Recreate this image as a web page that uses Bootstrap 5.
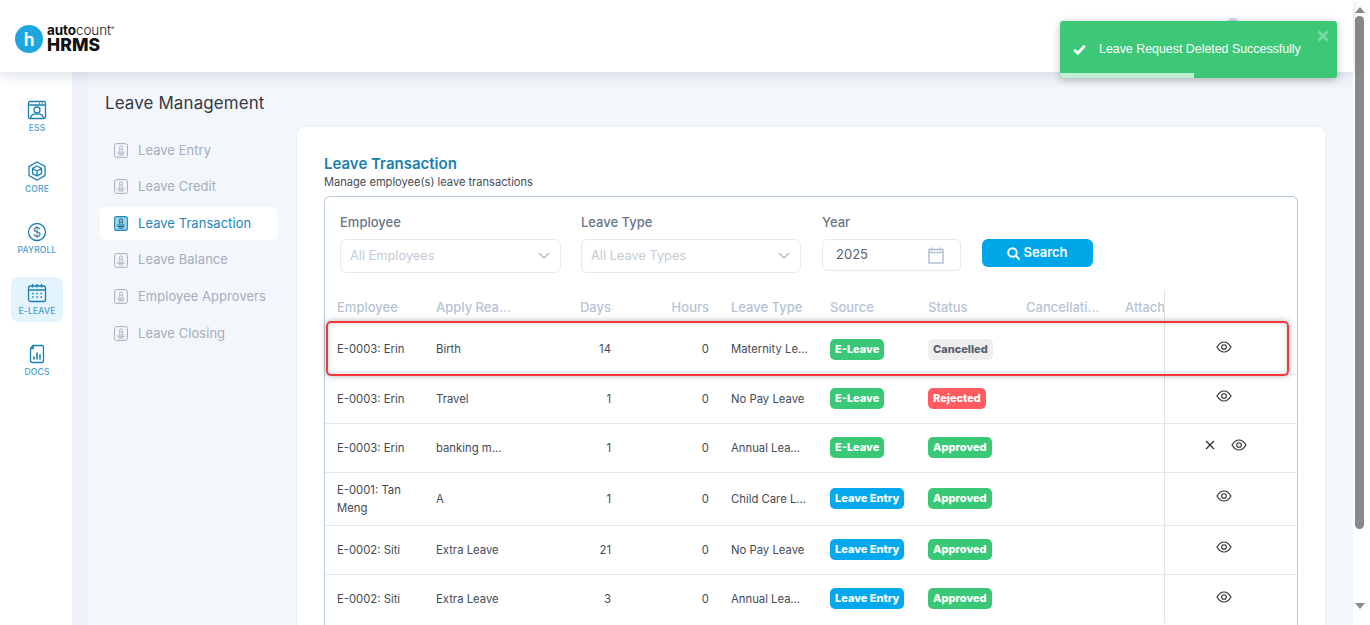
<!DOCTYPE html>
<html lang="en">
<head>
<meta charset="utf-8">
<title>Leave Transaction</title>
<link href="https://cdn.jsdelivr.net/npm/bootstrap@5.3.0/dist/css/bootstrap.min.css" rel="stylesheet">
<style>
html,body{height:625px;overflow:hidden;background:#fff}
body{font-family:Inter,"Noto Sans",sans-serif;color:#3f4254}
.app-frame{height:625px;width:1370px;overflow:hidden;position:relative}
.app-body{flex:1 1 auto;min-width:0;height:625px;display:flex;flex-direction:column}
.fake-scroll{width:17px;height:625px;background:#fff;flex:none;padding:7px 6px 3px 2px}
.fake-scroll .tri-up{width:0;height:0;border:5px solid transparent;border-top:0;border-bottom:6px solid #8a8a8a;margin:0 auto 3px}
.fake-scroll .thumb{height:513px;width:9px;background:#8a8a8a;border-radius:5px}
.fake-scroll .tri-down{width:0;height:0;border:5px solid transparent;border-bottom:0;border-top:6px solid #8a8a8a;margin:74px auto 0}
.top-bar{height:72px;background:#fff;flex:none;padding:5px 15px 0;box-shadow:0 2px 14px rgba(70,90,120,.22);position:relative;z-index:2}
.logo-dot{width:28px;height:28px;border-radius:50%;background:#1fa5e0;color:#fff;font:700 19px/27px Lato,sans-serif;text-align:center;flex:none}
.logo-words{margin-left:4px;color:#111;line-height:1}
.logo-a{font:700 13.500px/13px "Inter",sans-serif;letter-spacing:-.1px;white-space:nowrap}
.logo-a span{font-weight:300}
.logo-a sup{font-size:5px;top:-5px;font-weight:400;position:relative;line-height:0}
.logo-b{font:800 17.500px/16px Inter,sans-serif;letter-spacing:.1px}
.under-row{flex:1 1 auto;min-height:0;display:flex}
.side-rail{width:72px;background:#fff;flex:none;padding:22px 11px 0;gap:16px}
.rail-item{height:45px;width:52px;border-radius:8px;color:#1b7fb3;padding-top:6px}
.rail-item.on{background:#e3f4fd}
.rail-item svg{width:20px;height:20px;display:block}
.rail-item span{font-size:8.500px;font-weight:500;line-height:12px;margin-top:2px;color:#4a9cc8;letter-spacing:.2px}
.work-area{flex:1 1 auto;min-width:0;background:#f3f6fa;display:flex;border-left:16px solid #eff3f8}
.sub-menu{width:209px;flex:none;padding:21px 19px 0 12px}
.sub-title{font-size:16.900px;line-height:20px;color:#333a45;margin:0 0 21px 5px;font-weight:400;letter-spacing:.15px}
.sub-link{height:32.600px;margin-bottom:4px;border-radius:5px;padding-left:14px;gap:10px;color:#a4aebd;font-size:12.900px;letter-spacing:.1px;text-decoration:none;white-space:nowrap}
.sub-link svg{width:14px;height:15px;flex:none}
.sub-link.on{background:#fff;color:#2288b8}
.main-card{margin:55px 28px 0 0;flex:1 1 auto;min-width:0;border:0;border-radius:8px 8px 0 0;background:#fff;padding:28px 27px 0;height:500px;box-shadow:0 0 3px rgba(90,110,140,.1)}
.card-head{font-size:15px;font-weight:600;line-height:17px;color:#1b7fae;margin:0}
.card-sub{font-size:11.100px;line-height:14px;color:#444b57;margin:3px 0 7px}
.inner-box{border:1px solid #b9cadb;border-bottom:0;border-radius:6px 6px 0 0;height:470px;position:relative;padding:16px 0 0}
.filter-row{padding-left:15px;height:78px}
.filter-label{font-size:13px;font-weight:500;color:#68758a;line-height:18px;margin-bottom:8px;display:block}
.f-one{width:221px;margin-right:20px}
.f-two{width:220px;margin-right:21px}
.f-three{width:139px;margin-right:21px}
.fake-select{height:34px;border:1px solid #e4ebf3;border-radius:6px;padding:0 10px 0 9px;font-size:12.800px;color:#c4cbd5;background:#fff}
.fake-select svg{width:12px;height:8px;color:#b6bcc6}
.fake-date{height:32px;margin-top:1px;border:1px solid #e4ebf3;border-radius:5px;padding:0 16px 0 13px;font-size:13px;color:#5a616c;background:#fff}
.fake-date svg{width:16px;height:17px;color:#b3c1d3}
.go-btn{background:#00a7e8;border:0;color:#fff;border-radius:6px;width:111px;height:28px;margin-top:26px;font-size:13px;font-weight:600;padding:0;gap:3px}
.go-btn svg{width:13px;height:13px}
.data-table{table-layout:fixed;width:972px;margin:-1px 0 0;font-size:11.300px;color:#444a55}
.data-table th{height:35px;padding:0 12px;font-weight:500;font-size:13px;color:#b6c3d4;border-bottom:0;white-space:nowrap;overflow:hidden;vertical-align:middle}
.data-table td{height:49px;padding:0 10px 0 12px;border-bottom:1px solid #e6e9ee;vertical-align:middle;line-height:18px}
.data-table tr.tall td{height:53px}
.data-table tr:last-child td{border-bottom:0}
.data-table .num{text-align:right}
.data-table th.num{padding-right:10px}
.data-table .act{border-left:1px solid #dfe3ea;padding:0 14px 0 0;text-align:center;background:#fff}
.data-table .act.two-ico{padding-right:10px}
.cut{overflow:hidden;white-space:nowrap;text-overflow:ellipsis}
.cut-tight{max-width:71px}
.tag{display:inline-block;font-size:11px;font-weight:800;line-height:15px;padding:3px 5px;border-radius:5px;color:#fff;letter-spacing:0;white-space:nowrap}
.tag-green{background:#39c876}
.tag-blue{background:#03a9ec}
.tag-grey{background:#eeeeee;color:#5a6270}
.tag-red{background:#ff5b60}
.eye-ico{width:16px;height:14px;color:#333;position:relative;top:-3px}
.x-ico{width:12px;height:12px;color:#333;margin-right:15px;position:relative;top:-3px}
.red-mark{position:absolute;left:1px;top:124px;width:963px;height:55px;border:2px solid #f5373c;border-radius:5px;box-shadow:0 0 6px rgba(0,0,0,.3),inset 0 0 5px rgba(0,0,0,.18);pointer-events:none}
.toast-note{position:absolute;left:1060px;top:21px;width:277px;height:57px;background:#3dc878;border-radius:3px;color:#fff;font-family:"Liberation Sans",Arial,sans-serif;font-size:12.400px;z-index:5;box-shadow:0 2px 8px rgba(0,0,0,.25);padding:0 0 0 13px;gap:13px;overflow:hidden}
.toast-note .chk{width:13px;height:11px;flex:none}
.toast-close{position:absolute;right:8px;top:9px;width:12px;height:12px;color:#78dba3}
.toast-bar{position:absolute;left:0;bottom:0;height:5px;width:134px;background:#bfeed2}
.peek-dot{position:absolute;left:1226px;top:18px;width:14px;height:14px;border-radius:50%;background:#c4d2ea;z-index:3}
</style>
</head>
<body>
<svg width="0" height="0" class="d-block position-absolute">
  <symbol id="i-stamp" viewBox="0 0 14 15">
    <rect x=".6" y=".6" width="12.800" height="13.800" rx="2" fill="none" stroke="currentColor" stroke-width="1"/>
    <circle cx="7" cy="4.600" r="1.600" fill="none" stroke="currentColor" stroke-width=".9"/>
    <path d="M5.600 6.200v1.600M8.400 6.200v1.600M3.600 9h6.800M3.600 10.600h6.800M4.600 12.100h4.800" fill="none" stroke="currentColor" stroke-width=".9"/>
  </symbol>
  <symbol id="i-stamp-on" viewBox="0 0 14 15">
    <rect x=".6" y=".6" width="12.800" height="13.800" rx="2" fill="#9fd3ea" stroke="currentColor" stroke-width="1.100"/>
    <circle cx="7" cy="4.600" r="1.700" fill="none" stroke="#14688f" stroke-width="1"/>
    <path d="M5.600 6.200v1.600M8.400 6.200v1.600M3.400 9h7.200M3.400 10.600h7.200M4.600 12.100h4.800" fill="none" stroke="#14688f" stroke-width="1"/>
  </symbol>
  <symbol id="i-eye" viewBox="0 0 16 14">
    <path d="M1 7c2-3.300 4.300-5 7-5s5 1.700 7 5c-2 3.300-4.300 5-7 5s-5-1.700-7-5z" fill="none" stroke="currentColor" stroke-width="1.200"/>
    <circle cx="8" cy="7" r="2.300" fill="none" stroke="currentColor" stroke-width="1.100"/>
  </symbol>
  <symbol id="i-chev" viewBox="0 0 12 8"><path d="M1.500 1.500 6 6l4.500-4.500" fill="none" stroke="currentColor" stroke-width="1.500" stroke-linecap="round"/></symbol>
</svg>

<div class="app-frame d-flex">
  <div class="app-body">
    <header class="top-bar d-flex align-items-center">
      <div class="logo-dot">h</div>
      <div class="logo-words">
        <div class="logo-a">auto<span>count</span><sup>®</sup></div>
        <div class="logo-b">HRMS</div>
      </div>
    </header>
    <div class="under-row">
      <nav class="side-rail d-flex flex-column">
        <a class="rail-item d-flex flex-column align-items-center text-decoration-none">
          <svg viewBox="0 0 20 20" fill="none" stroke="currentColor" stroke-width="1.300"><rect x="1.500" y="1.500" width="17" height="17" rx="1.500"/><path d="M1.500 5h17M12 3.300h1M14.500 3.300h1M3.500 18.300c0-3 2.500-4.500 6.500-4.500s6.500 1.500 6.500 4.500"/><circle cx="10" cy="10" r="3"/></svg>
          <span>ESS</span>
        </a>
        <a class="rail-item d-flex flex-column align-items-center text-decoration-none">
          <svg viewBox="0 0 20 20" fill="none" stroke="currentColor" stroke-width="1.300"><path d="M10 1l8 4.500v9L10 19l-8-4.500v-9z"/><path d="M10 5l4.500 2.500v5L10 15l-4.500-2.500v-5zM5.500 7.500 10 10l4.500-2.500M10 10v5"/></svg>
          <span>CORE</span>
        </a>
        <a class="rail-item d-flex flex-column align-items-center text-decoration-none">
          <svg viewBox="0 0 20 20" fill="none" stroke="currentColor" stroke-width="1.300"><circle cx="10" cy="10" r="8.500"/><text x="10" y="14.500" text-anchor="middle" font-size="13" font-family="Inter,sans-serif" font-weight="400" fill="currentColor" stroke="none">$</text></svg>
          <span>PAYROLL</span>
        </a>
        <a class="rail-item on d-flex flex-column align-items-center text-decoration-none">
          <svg viewBox="0 0 20 20" fill="none" stroke="currentColor" stroke-width="1.300"><rect x="1.500" y="3" width="17" height="15.500" rx="2"/><path d="M1.500 7h17M5.500 1v3.500M10 1v3.500M14.500 1v3.500"/><path d="M5 10.500h1.500M9.300 10.500h1.500M13.500 10.500H15M5 14h1.500M9.300 14h1.500M13.500 14H15" stroke-width="1.600"/></svg>
          <span>E-LEAVE</span>
        </a>
        <a class="rail-item d-flex flex-column align-items-center text-decoration-none">
          <svg viewBox="0 0 20 20" fill="none" stroke="currentColor" stroke-width="1.300"><path d="M6 1.500h8.500a2 2 0 0 1 2 2v13a2 2 0 0 1-2 2h-9a2 2 0 0 1-2-2V4.500z"/><path d="M6 1.500v3H3.500M7 15.500v-3M10 15.500V8.500M13 15.500v-5" stroke-width="1.600"/></svg>
          <span>DOCS</span>
        </a>
      </nav>
      <div class="work-area">
        <aside class="sub-menu">
          <h1 class="sub-title">Leave Management</h1>
          <a class="sub-link d-flex align-items-center"><svg><use href="#i-stamp"/></svg>Leave Entry</a>
          <a class="sub-link d-flex align-items-center"><svg><use href="#i-stamp"/></svg>Leave Credit</a>
          <a class="sub-link on d-flex align-items-center"><svg><use href="#i-stamp-on"/></svg>Leave Transaction</a>
          <a class="sub-link d-flex align-items-center"><svg><use href="#i-stamp"/></svg>Leave Balance</a>
          <a class="sub-link d-flex align-items-center"><svg><use href="#i-stamp"/></svg>Employee Approvers</a>
          <a class="sub-link d-flex align-items-center"><svg><use href="#i-stamp"/></svg>Leave Closing</a>
        </aside>
        <section class="card main-card">
          <h2 class="card-head">Leave Transaction</h2>
          <p class="card-sub">Manage employee(s) leave transactions</p>
          <div class="inner-box">
            <div class="filter-row d-flex align-items-start">
              <div class="f-one">
                <label class="filter-label">Employee</label>
                <div class="fake-select d-flex align-items-center justify-content-between">All Employees<svg><use href="#i-chev"/></svg></div>
              </div>
              <div class="f-two">
                <label class="filter-label">Leave Type</label>
                <div class="fake-select d-flex align-items-center justify-content-between">All Leave Types<svg><use href="#i-chev"/></svg></div>
              </div>
              <div class="f-three">
                <label class="filter-label">Year</label>
                <div class="fake-date d-flex align-items-center justify-content-between">2025
                  <svg viewBox="0 0 16 17" fill="none" stroke="currentColor" stroke-width="1.500"><rect x="1" y="2.500" width="14" height="13.500"/><path d="M1 5.500h14M4 .5v3M12 .5v3"/></svg>
                </div>
              </div>
              <button class="btn go-btn d-flex align-items-center justify-content-center" type="button">
                <svg viewBox="0 0 13 13" fill="none" stroke="currentColor" stroke-width="1.900"><circle cx="5.500" cy="5.500" r="4.300"/><path d="M8.700 8.700 12 12" stroke-linecap="round"/></svg>Search
              </button>
            </div>
            <table class="table data-table mb-0">
              <colgroup>
                <col style="width:99px"><col style="width:99px"><col style="width:98px"><col style="width:98px"><col style="width:99px"><col style="width:98px"><col style="width:98px"><col style="width:99px"><col style="width:51px"><col style="width:133px">
              </colgroup>
              <thead>
                <tr><th>Employee</th><th><div class="cut">Apply Reason</div></th><th class="num">Days</th><th class="num">Hours</th><th>Leave Type</th><th>Source</th><th>Status</th><th><div class="cut">Cancellation</div></th><th>Attach</th><th class="act"></th></tr>
              </thead>
              <tbody>
                <tr><td>E-0003: Erin</td><td>Birth</td><td class="num">14</td><td class="num">0</td><td><div class="cut">Maternity Leave</div></td><td><span class="tag tag-green">E-Leave</span></td><td><span class="tag tag-grey">Cancelled</span></td><td></td><td></td><td class="act"><svg class="eye-ico"><use href="#i-eye"/></svg></td></tr>
                <tr><td>E-0003: Erin</td><td>Travel</td><td class="num">1</td><td class="num">0</td><td><div class="cut">No Pay Leave</div></td><td><span class="tag tag-green">E-Leave</span></td><td><span class="tag tag-red">Rejected</span></td><td></td><td></td><td class="act"><svg class="eye-ico"><use href="#i-eye"/></svg></td></tr>
                <tr><td>E-0003: Erin</td><td><div class="cut cut-tight">banking matters</div></td><td class="num">1</td><td class="num">0</td><td><div class="cut cut-tight">Annual Leave</div></td><td><span class="tag tag-green">E-Leave</span></td><td><span class="tag tag-green">Approved</span></td><td></td><td></td><td class="act two-ico"><svg class="x-ico" viewBox="0 0 12 12"><path d="M2 2l8 8M10 2l-8 8" stroke="currentColor" stroke-width="1.300" fill="none"/></svg><svg class="eye-ico"><use href="#i-eye"/></svg></td></tr>
                <tr class="tall"><td>E-0001: Tan Meng</td><td>A</td><td class="num">1</td><td class="num">0</td><td><div class="cut">Child Care Leave</div></td><td><span class="tag tag-blue">Leave Entry</span></td><td><span class="tag tag-green">Approved</span></td><td></td><td></td><td class="act"><svg class="eye-ico"><use href="#i-eye"/></svg></td></tr>
                <tr><td>E-0002: Siti</td><td>Extra Leave</td><td class="num">21</td><td class="num">0</td><td><div class="cut">No Pay Leave</div></td><td><span class="tag tag-blue">Leave Entry</span></td><td><span class="tag tag-green">Approved</span></td><td></td><td></td><td class="act"><svg class="eye-ico"><use href="#i-eye"/></svg></td></tr>
                <tr><td>E-0002: Siti</td><td>Extra Leave</td><td class="num">3</td><td class="num">0</td><td><div class="cut cut-tight">Annual Leave</div></td><td><span class="tag tag-blue">Leave Entry</span></td><td><span class="tag tag-green">Approved</span></td><td></td><td></td><td class="act"><svg class="eye-ico"><use href="#i-eye"/></svg></td></tr>
              </tbody>
            </table>
            <div class="red-mark"></div>
          </div>
        </section>
      </div>
    </div>
  </div>
  <div class="fake-scroll">
    <div class="tri-up"></div>
    <div class="thumb"></div>
    <div class="tri-down"></div>
  </div>
  <div class="peek-dot"></div>
  <div class="toast-note d-flex align-items-center" role="alert">
    <svg class="chk" viewBox="0 0 13 11" fill="none" stroke="#fff" stroke-width="2.800"><path d="M1.200 5.800 4.800 9.200 11.800 1.800"/></svg>
    <span>Leave Request Deleted Successfully</span>
    <svg class="toast-close" viewBox="0 0 12 12"><path d="M1.500 1.500l9 9M10.500 1.500l-9 9" stroke="currentColor" stroke-width="2.600" fill="none"/></svg>
    <div class="toast-bar"></div>
  </div>
</div>
<script src="https://cdn.jsdelivr.net/npm/bootstrap@5.3.0/dist/js/bootstrap.bundle.min.js"></script>
</body>
</html>
